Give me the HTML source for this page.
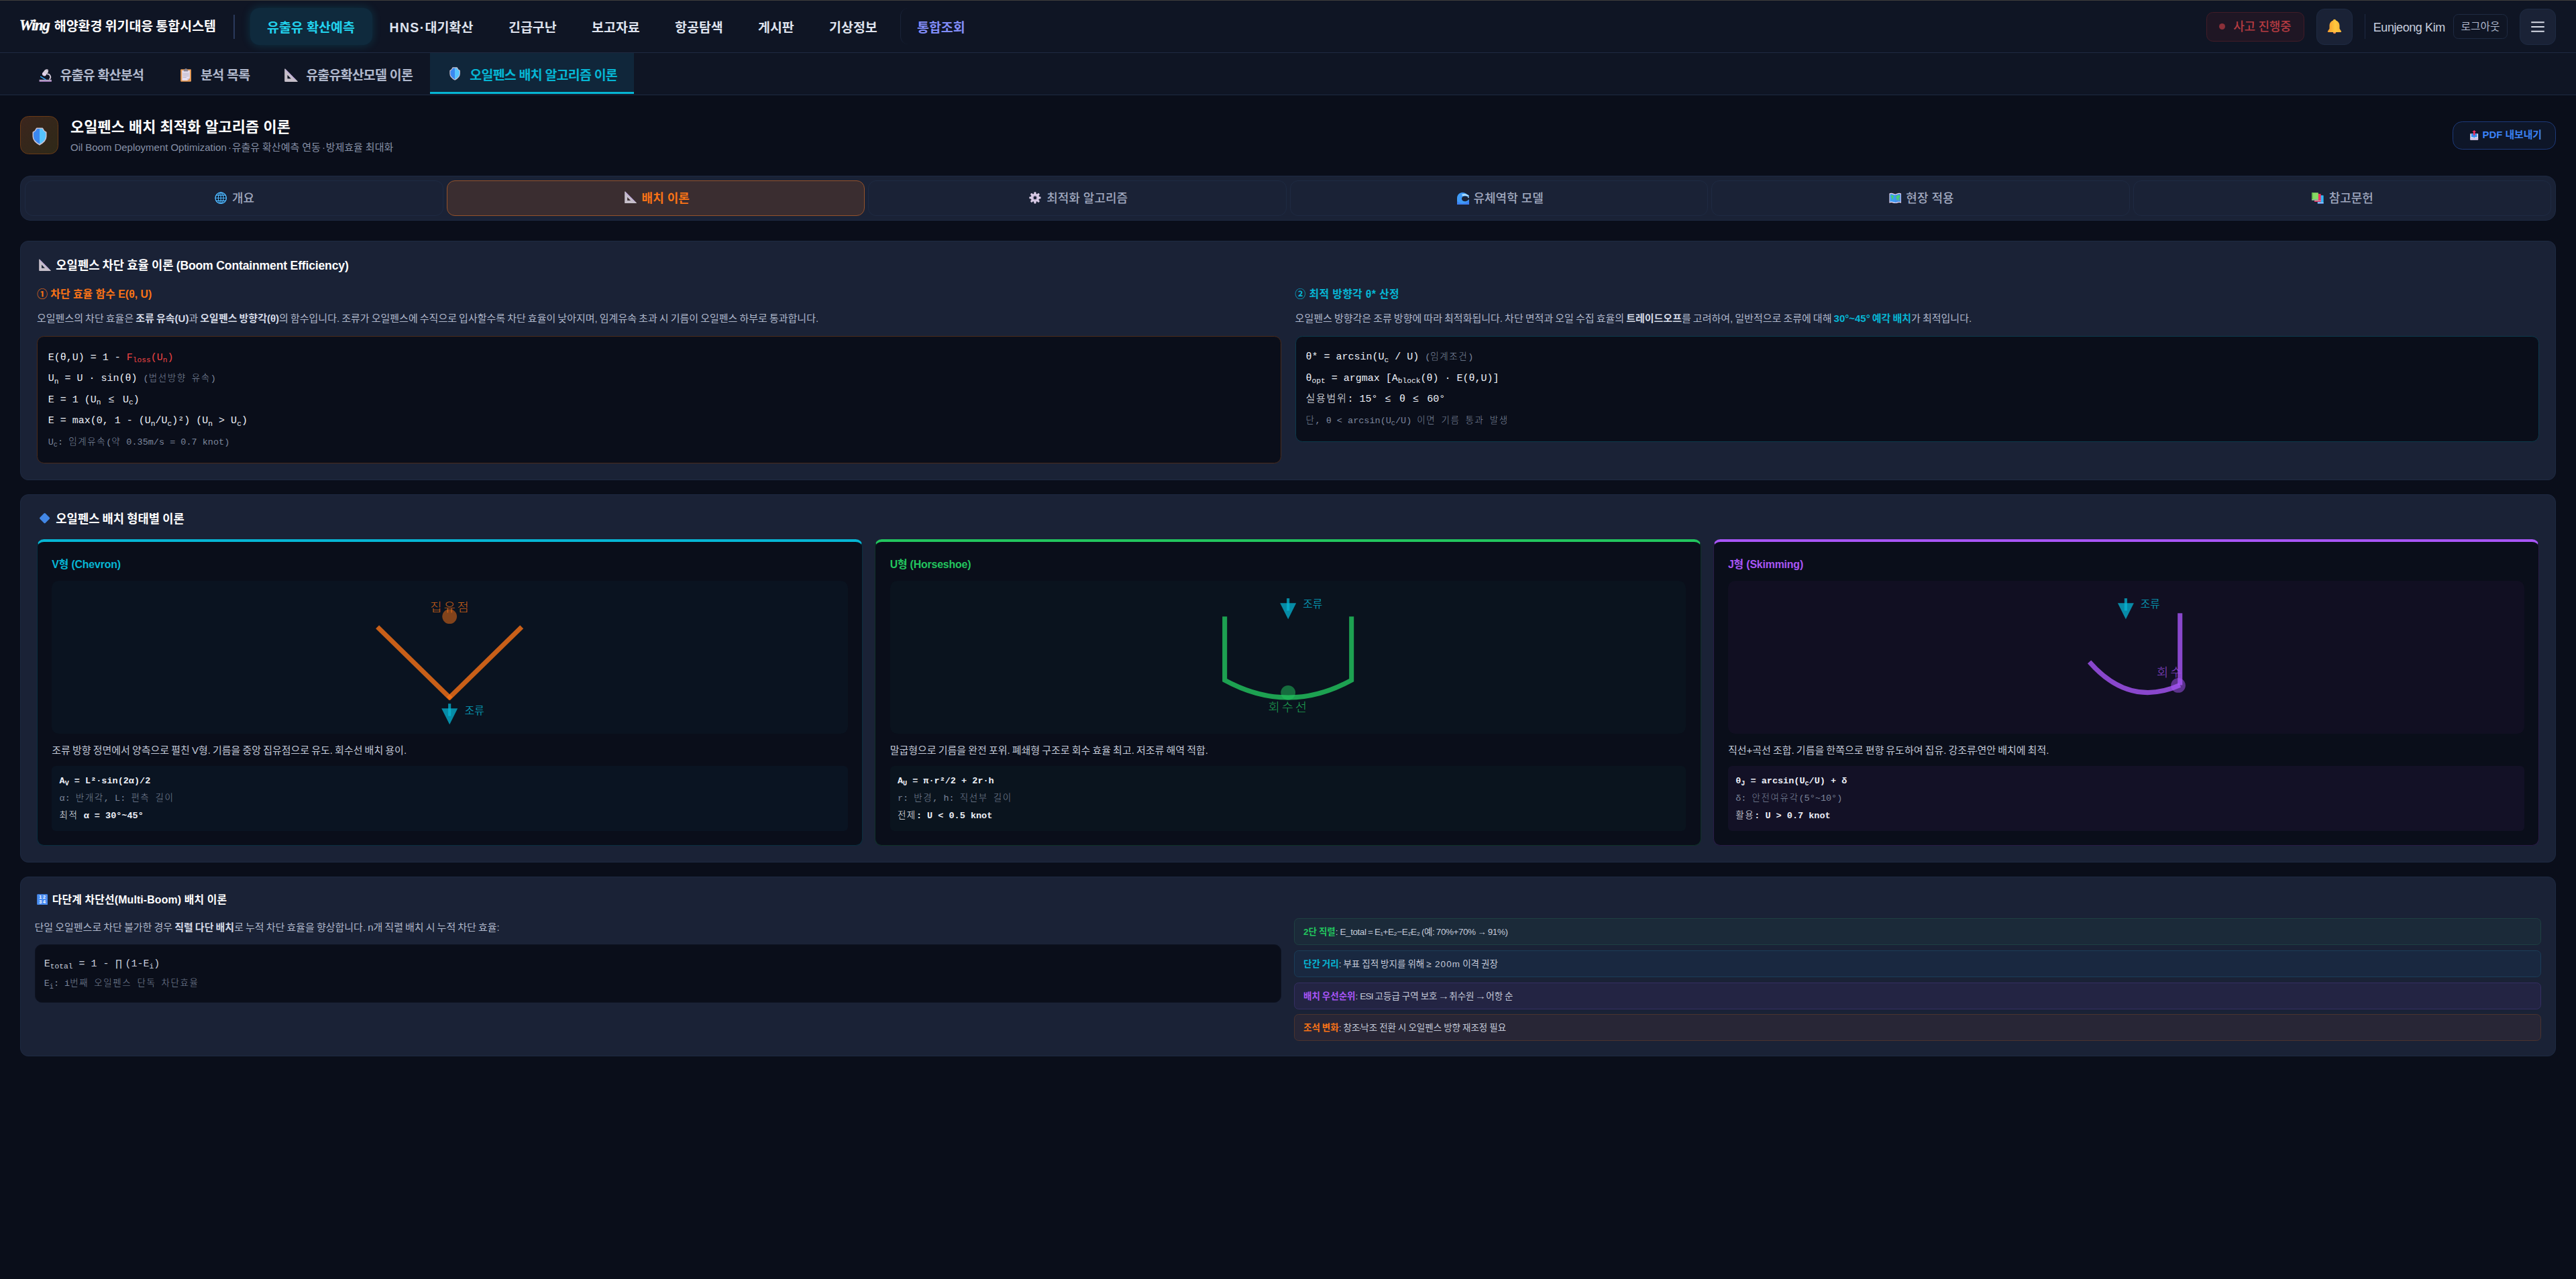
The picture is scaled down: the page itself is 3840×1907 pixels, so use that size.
<!DOCTYPE html>
<html lang="ko">
<head>
<meta charset="utf-8">
<title>오일펜스 배치 최적화 알고리즘 이론</title>
<style>
*{box-sizing:border-box;margin:0;padding:0}
html{background:#0a0e1a;overflow:hidden}
body{zoom:1.5;width:2560px;height:1271.34px;position:relative;overflow:hidden;background:#0a0e1a;color:#edf0f7;
 font-family:"Liberation Sans","Noto Sans CJK KR",sans-serif;font-size:13px;line-height:1.2;-webkit-font-smoothing:antialiased}
.mono{font-family:"Liberation Mono","Noto Sans CJK KR",monospace}
.abs{position:absolute}
b,.b{font-weight:700}
svg{display:block}

/* ===== top header ===== */
#topline{position:absolute;left:0;top:0;width:2560px;height:.67px;background:#3f3e3c}
#hdr{position:absolute;left:0;top:0;width:2560px;height:52.67px;background:#0f1524;border-bottom:1px solid #1e2a42}
#hdr .t{position:absolute;white-space:nowrap;font-weight:700;font-size:13px;line-height:20px;height:20px;top:17.5px;color:#dfe3ee}
#logo{position:absolute;left:19.2px;top:13.9px;width:32px;height:22px;font-family:"Liberation Serif",serif;font-style:italic;font-weight:700;font-size:15.4px;line-height:22px;-webkit-text-stroke:.25px #fff;color:#fff;letter-spacing:-1px;white-space:nowrap}
#hdiv{position:absolute;left:232.3px;top:14.5px;width:1px;height:24px;background:#2a3a5c}
#navact{position:absolute;left:248.7px;top:7.8px;width:121.3px;height:37px;border-radius:9px;background:#0f2a3d;box-shadow:0 0 9px rgba(6,182,212,.2)}
#intg{position:absolute;left:894.5px;top:8.3px;width:90px;height:36px;border-left:1px solid #1a2338;border-radius:8px 0 0 8px}

/* ===== sub nav ===== */
#sub{position:absolute;left:0;top:52.67px;width:2560px;height:42.33px;background:#0f1524;border-bottom:1px solid #1e2a42}
#sub .t{position:absolute;white-space:nowrap;font-weight:700;font-size:13px;line-height:20px;height:20px;top:12.3px;color:#b0b8cc;letter-spacing:-.53px}
#subact{position:absolute;left:427.3px;top:0;width:202.7px;height:40.9px;background:#10263a;border-bottom:2px solid #06b6d4}
#sub svg{position:absolute}

/* ===== header right ===== */
#inc{position:absolute;left:2192.7px;top:12.3px;width:97.3px;height:29px;border-radius:6.5px;background:#1f1624;border:1px solid #421c27}
#inc i{position:absolute;left:12.1px;top:10.4px;width:6px;height:6px;border-radius:50%;background:#8c3039}
#inc span{position:absolute;left:26.2px;top:3.9px;font-size:12px;line-height:20px;font-weight:500;color:#b53b41;white-space:nowrap;letter-spacing:-.2px}
.sqbtn{position:absolute;top:8.67px;width:36px;height:36px;border-radius:8px;background:#1a2236;border:1px solid #1e2a42}
#rdiv{position:absolute;left:2349.7px;top:14px;width:1px;height:24.7px;background:#1e2a42}
#uname{position:absolute;left:2358.5px;top:17.2px;font-size:12px;line-height:20px;color:#c8cede;white-space:nowrap;font-weight:400;letter-spacing:-.28px}
#logout{position:absolute;left:2438px;top:14px;width:54px;height:24.7px;border-radius:5px;border:1px solid #1e2a42;font-size:10.5px;line-height:23.8px;text-align:center;color:#b0b8cc;white-space:nowrap}

/* ===== page head ===== */
#picon{position:absolute;left:20px;top:115.33px;width:38px;height:38px;border-radius:8.5px;background:linear-gradient(135deg,#3b251d,#2e2918);border:1px solid #6a3a16}
#ptitle{position:absolute;left:70px;top:114.4px;font-size:14.6px;font-weight:700;line-height:24px;color:#fff;white-space:nowrap;letter-spacing:.05px}
#psub{position:absolute;left:70px;top:139.2px;font-size:10px;line-height:15px;color:#8690a6;white-space:nowrap;word-spacing:-.15px}
#psub i{font-style:normal;letter-spacing:-1.1px}
#pdf{position:absolute;left:2437.3px;top:120.67px;width:102.7px;height:28px;border-radius:9.5px;background:#0e1628;border:1px solid #1d3a7a;color:#3b82f6;font-weight:700;font-size:9.9px;line-height:26px;white-space:nowrap}
#pdf span{position:absolute;left:29.1px;top:.3px}

/* ===== tab bar ===== */
#tabs{position:absolute;left:20px;top:174.67px;width:2520px;height:44.67px;border-radius:10px;background:#1a2236;border:1px solid #1e2a42}
.tab{position:absolute;top:4px;width:415.67px;height:35px;border-radius:8px;border:1px solid #1e2a42;color:#a0a8bf;font-size:12px;font-weight:500;line-height:33px;white-space:nowrap}
.tab.on{background:#3a2d30;border-color:#95522a;color:#f97316;font-weight:700}
.tab span{position:absolute;top:1.35px}
.tab svg{position:absolute}

/* ===== cards ===== */
.card{position:absolute;left:20px;width:2520px;border-radius:8px;background:#1a2236;border:1px solid #1e2a42}
.card .ttl{position:absolute;font-size:11.8px;font-weight:700;line-height:20px;color:#fff;white-space:nowrap;word-spacing:-.5px}
.card .ttl .la{letter-spacing:-.15px;word-spacing:0}
.h3{position:absolute;font-size:10.6px;font-weight:700;line-height:18px;white-space:nowrap}
.p{position:absolute;font-size:10px;line-height:18px;color:#b0b8cc;white-space:nowrap;word-spacing:-.72px}
.p b{color:#d6dbe8}
.code{position:absolute;border-radius:7px;background:#0a0e1a;border:1px solid #1e2a42}
.code div{position:absolute;left:10.5px;white-space:nowrap;font-family:"Liberation Mono","Noto Sans CJK KR",monospace;font-size:10px;line-height:21px;height:21px;color:#edf0f7}
sub{font-size:.75em;line-height:0;vertical-align:baseline;position:relative;top:.3em}
.dim,.code div.dim{color:#7d879d}
.k{letter-spacing:1.15px;font-weight:300}
.k9{letter-spacing:1.05px;font-weight:300}
.le{margin:0 2.3px 0 1.3px}
.md{font-style:normal;margin:0 -1.1px 0 -1.2px}
.ar{margin:0 -.6px;display:inline-block;transform:scaleX(1.25)}
.sc{position:absolute;top:44.2px;width:820.89px;height:304.2px;border-radius:7px;background:#0a0e1a;border:1px solid #1e2a42;border-top:3px solid #06b6d4}
.sc .h3{left:14.2px;top:13.2px;font-size:10.6px;letter-spacing:-.12px}
.sc .dg{position:absolute;left:14.2px;top:38.67px;width:791.15px;height:151.7px;border-radius:7px}
.sc .dg svg{position:absolute;left:.1px;top:0}
.sc .p{left:14.2px;top:197.6px;font-size:10px;color:#c3c9d8}
.sc .fx{position:absolute;left:14.2px;top:222.3px;width:791.15px;height:64.6px;border-radius:4px}
.sc .fx div{position:absolute;left:7.5px;white-space:nowrap;font-family:"Liberation Mono","Noto Sans CJK KR",monospace;font-size:9px;line-height:17.2px;height:17.2px;color:#edf0f7;font-weight:700}
.sc .fx div.dim{font-weight:400;color:#7b8499}
.it{position:absolute;left:1265.5px;width:1239.1px;height:26.67px;border-radius:4.5px;font-size:9px;line-height:26.9px;word-spacing:-.5px;color:#c3c9d8;white-space:nowrap;padding-left:8.5px}
</style>
</head>
<body>
<div id="hdr">
  <div id="logo">Wing</div>
  <div class="t" style="left:53.8px;top:15.8px;color:#fff;word-spacing:-.9px">해양환경 위기대응 통합시스템</div>
  <div id="hdiv"></div>
  <div id="navact"></div>
  <div class="t" style="left:265.3px;color:#22d3ee">유출유 확산예측</div>
  <div class="t" style="left:387px"><span style="letter-spacing:.9px">HNS·</span>대기확산</div>
  <div class="t" style="left:505.3px">긴급구난</div>
  <div class="t" style="left:588px">보고자료</div>
  <div class="t" style="left:670.7px">항공탐색</div>
  <div class="t" style="left:753.3px">게시판</div>
  <div class="t" style="left:824px">기상정보</div>
  <div id="intg"></div>
  <div class="t" style="left:911.3px;color:#818cf8">통합조회</div>
  <div id="inc"><i></i><span>사고 진행중</span></div>
  <div class="sqbtn" style="left:2302px"><svg width="36" height="36" viewBox="0 0 36 36" style="position:absolute;left:-1px;top:-1px"><defs><linearGradient id="bg1" x1="0" y1="0" x2="1" y2="0"><stop offset="0" stop-color="#f59a2e"/><stop offset=".55" stop-color="#ffc83d"/><stop offset="1" stop-color="#f7b23a"/></linearGradient></defs><path d="M18 10.500c-.8 0-1.300.5-1.400 1.200-2.200.7-3.600 2.800-3.600 5.300v2.800l-1.700 2.600c-.3.500 0 1 .6 1h12.200c.6 0 .9-.5.600-1l-1.700-2.600v-2.800c0-2.500-1.400-4.600-3.600-5.300-.1-.7-.6-1.200-1.400-1.200z" fill="url(#bg1)"/><path d="M16.500 23.400h3a1.500 1.500 0 0 1-3 0z" fill="#f08a50"/></svg></div>
  <div id="rdiv"></div>
  <div id="uname">Eunjeong Kim</div>
  <div id="logout">로그아웃</div>
  <div class="sqbtn" style="left:2504px"><svg width="36" height="36" viewBox="0 0 36 36" style="position:absolute;left:-1px;top:-1px"><path d="M11.5 13.5h13M11.500 18h13M11.500 22.500h13" stroke="#d7dbe6" stroke-width="1.400" fill="none"/></svg></div>
</div>
<div id="topline"></div>
<div id="sub">
  <div id="subact"></div>
  <div class="t" style="left:59.6px">유출유 확산분석</div>
  <div class="t" style="left:199.4px">분석 목록</div>
  <div class="t" style="left:304.1px">유출유확산모델 이론</div>
  <div class="t" style="left:466.9px;color:#06b6d4">오일펜스 배치 알고리즘 이론</div>
  <svg viewBox="0 0 20 20" width="13" height="13" style="position:absolute;left:38.5px;top:15.87px"><path d="M0.600 16.200h18.800v2.200h-18.800z" fill="#b9a5c6"/><path d="M0.600 18.400h18.800v1.200h-18.800z" fill="#9b6fb4"/><path d="M12.400 7.600a4.700 4.700 0 0 1 3.400 8.400" fill="none" stroke="#cfc6d6" stroke-width="2"/><path d="M2.800 11.600l7.400 4.400" stroke="#38a8f8" stroke-width="1.500" stroke-linecap="round"/><g transform="rotate(-52 9.600 5.600)"><rect x="4.200" y="2.600" width="10.800" height="6.200" rx="3" fill="#d6cfdb"/><rect x="6" y="2.600" width="2" height="6.200" fill="#e9d2f5"/><rect x="14.200" y="3.800" width="1.800" height="3.600" rx=".8" fill="#b5abbc"/></g></svg>
  <svg viewBox="0 0 16.500 20" width="10.8" height="13.3" style="position:absolute;left:179.3px;top:15.33px"><rect x=".2" y="1" width="16.100" height="19" rx="1.200" fill="#e59a57"/><path d="M2.400 2.800h11.800v11.800l-3.600 3.600h-8.200z" fill="#e6e0f1"/><path d="M10.600 18.200l3.600-3.600h-3.600z" fill="#cfc6e0"/><path d="M4.800 1.800h6.800v2.600h-6.800z" fill="#8b8591"/><path d="M7 0h2.600l.6 2h-3.800z" fill="#8b8591"/><path d="M3.600 7.200h9.400M3.600 9.400h9.400M3.600 11.400h9.400M3.600 13.600h5.600" stroke="#b6aebf" stroke-width=".9"/></svg>
  <svg viewBox="0 0 20 20" width="13.3" height="13.3" style="position:absolute;left:282.7px;top:15.27px"><path d="M1.200.6L19.600 19.100a.5.500 0 0 1-.4.900H1.200a1 1 0 0 1-1-1V1a.6.600 0 0 1 1-.4zM4.500 9.800v5.400h5.400z" fill="#c6bfca" fill-rule="evenodd"/><path d="M2.700 3l15 15" stroke="#b384f5" stroke-width="1.350" stroke-linecap="round" stroke-dasharray=".01 3.030"/></svg>
  <svg viewBox="0 0 16 20" width="10.8" height="13.33" style="position:absolute;left:446.5px;top:14px"><path d="M5.200.3h5.600q1 0 1.400 1.100.8 2.200 3 3.200.600.300.600 1v4.400q0 5.600-7.800 9.800-7.800-4.200-7.800-9.800v-4.400q0-.7.600-1 2.200-1 3-3.200.400-1.100 1.400-1.100z" fill="#c9c2d2"/><path d="M8 1.500h-2.600q-.4 0-.5.400-.9 2.400-3.300 3.600-.3.100-.3.500v4q0 4.600 6.700 8.400z" fill="#3a88f0"/><path d="M8 1.500h2.600q.4 0 .5.400.9 2.400 3.300 3.600.3.100.3.500v4q0 4.600-6.700 8.400z" fill="#55c4ff"/></svg>
</div>
<div id="picon"><svg viewBox="0 0 16 20" width="14.7" height="18" style="position:absolute;left:11.1px;top:10.4px"><path d="M5.200.3h5.600q1 0 1.400 1.100.8 2.200 3 3.200.600.300.600 1v4.400q0 5.600-7.800 9.800-7.800-4.200-7.800-9.800v-4.400q0-.7.600-1 2.200-1 3-3.200.400-1.100 1.400-1.100z" fill="#c9c2d2"/><path d="M8 1.500h-2.600q-.4 0-.5.400-.9 2.400-3.300 3.600-.3.100-.3.500v4q0 4.600 6.700 8.400z" fill="#3a88f0"/><path d="M8 1.500h2.600q.4 0 .5.400.9 2.400 3.300 3.600.3.100.3.500v4q0 4.600-6.700 8.400z" fill="#55c4ff"/></svg></div>
<div id="ptitle">오일펜스 배치 최적화 알고리즘 이론</div>
<div id="psub">Oil Boom Deployment Optimization<i> · </i>유출유 확산예측 연동<i> · </i>방제효율 최대화</div>
<div id="pdf"><svg viewBox="0 0 12.500 15" width="8.3" height="10" style="position:absolute;left:16.8px;top:7.67px"><path d="M.3 5.200h11.900v8.800q0 .8-.8.800h-10.300q-.8 0-.8-.8z" fill="#e9e2f4"/><path d="M.3 12h11.900v2q0 .8-.8.800h-10.300q-.8 0-.8-.8z" fill="#cdbfe0"/><path d="M1.900 5.200h8.700v5.200h-3l-1.350 1.400-1.350-1.400h-3z" fill="#3b8ff0"/><path d="M6.250 0l2.900 3h-1.700v4.800h-2.400v-4.800h-1.700z" fill="#f02d5e"/></svg><span>PDF 내보내기</span></div>
<div id="tabs">
  <div class="tab" style="left:4px"><svg viewBox="0 0 20 20" width="12.3" height="12.3" style="position:absolute;left:188px;top:10.5px"><circle cx="10" cy="10" r="9.600" fill="#4fb8ff"/><circle cx="10" cy="10" r="8.100" fill="#0b1020"/><g fill="none" stroke="#4fb8ff" stroke-width="1.250"><ellipse cx="10" cy="10" rx="4.200" ry="8.700"/><path d="M10 1v18M1 10h18M2.300 5.500h15.400M2.300 14.500h15.400"/></g></svg><span style="left:205.3px">개요</span></div>
  <div class="tab on" style="left:423px"><svg viewBox="0 0 20 20" width="12.3" height="12.3" style="position:absolute;left:176.1px;top:10px"><path d="M1.200.6L19.600 19.100a.5.500 0 0 1-.4.900H1.200a1 1 0 0 1-1-1V1a.6.600 0 0 1 1-.4zM4.500 9.800v5.400h5.400z" fill="#c6bfca" fill-rule="evenodd"/><path d="M2.700 3l15 15" stroke="#b384f5" stroke-width="1.350" stroke-linecap="round" stroke-dasharray=".01 3.030"/></svg><span style="left:193.4px">배치 이론</span></div>
  <div class="tab" style="left:842px"><svg viewBox="0 0 20 20" width="11.9" height="11.9" style="position:absolute;left:159.6px;top:10.5px"><g fill="#d9cbe6"><circle cx="10" cy="10" r="7"/><rect x="8.200" y=".2" width="3.600" height="19.600" rx="1.600"/><rect x="8.200" y=".2" width="3.600" height="19.600" rx="1.600" transform="rotate(45 10 10)"/><rect x="8.200" y=".2" width="3.600" height="19.600" rx="1.600" transform="rotate(90 10 10)"/><rect x="8.200" y=".2" width="3.600" height="19.600" rx="1.600" transform="rotate(135 10 10)"/></g><circle cx="10" cy="10" r="4.300" fill="#c3b3d3"/><circle cx="10" cy="10" r="2.600" fill="#1a2236"/></svg><span style="left:176.8px">최적화 알고리즘</span></div>
  <div class="tab" style="left:1261px"><svg viewBox="0 0 20 20" width="12.1" height="12.1" style="position:absolute;left:165.7px;top:11px"><path d="M0 20V9.500C0 4 3.800 0 8.800 0c3.400 0 6.400 1.400 8.200 3.600l2.800 1.200-.6 3.200c-2.400-1.800-5.800-2.400-8.400-1.600-2.600.8-3.800 3.400-2.600 5.600 1.200 2.200 4 3 6.800 2.200 2-.6 3.800-1.800 5-3.400V20z" fill="#3f9bf7"/><path d="M0 20v-6c3 3.400 8 4.600 12.600 3.400 3-.8 5.600-2.600 7.400-5V20z" fill="#3d7ff0"/><path d="M7.600 3.600c3-1.600 7.600-1.200 10.800.8l1 2.800c-3-1.800-6.800-2.400-9.800-1.400z" fill="#b9e4ff"/><circle cx="18.600" cy="8.200" r=".9" fill="#b9e4ff"/></svg><span style="left:182px">유체역학 모델</span></div>
  <div class="tab" style="left:1680px"><svg viewBox="0 0 20 18" width="12.3" height="11.07" style="position:absolute;left:175.9px;top:11.1px"><path d="M.4 1.700Q3 .2 5.400 1.200L10 2.800l4.600-1.600Q17 .2 19.600 1.700V17.200Q17 15.600 14.600 16.600L10 18l-4.600-1.400Q3 15.600.4 17.200z" fill="#e8d3ea"/><path d="M1.400 2.900Q3.400 1.800 5.400 2.600L10 4.200l4.600-1.600Q16.600 1.800 18.600 2.900V15.200Q16.600 14.200 14.600 15L10 16.400 5.400 15Q3.400 14.200 1.400 15.200z" fill="#3d9cf2"/><path d="M10 4.200l4.600-1.600Q16.600 1.800 18.600 2.900V15.200Q16.600 14.200 14.600 15L10 16.400z" fill="#4b8fe8"/><path d="M3 4.800l2.200-.5 2 1 1 .2-.8 1.600-1.200.6.400 2.200-1 1.800-1.200-1.800-.2-2.200-1.400-1.200zM11.200 7.200l1.800-2.200 2.800-.8 1.800.8-.6 1.400.4 1.600-1.600.6-.4 2.600-1.400 1.400-1.200-.4-.4-2.200-1.200-1.400zM16 10.600l1.200.6.200 1.600-1.400.4z" fill="#46d070"/></svg><span style="left:192.9px">현장 적용</span></div>
  <div class="tab" style="left:2099px"><svg viewBox="0 0 20 19" width="12" height="11.4" style="position:absolute;left:177px;top:11.1px"><rect x="9.800" y="4.600" width="9.800" height="14" rx=".8" fill="#35b4f5"/><rect x="9.800" y="16.600" width="9.800" height="1.100" fill="#d9cfee"/><rect x="9.800" y="17.700" width="9.800" height=".9" fill="#3b6fd8"/><rect x="4.600" y="2.300" width="10.600" height="13.200" rx=".8" fill="#ee3266"/><rect x="4.600" y="13.600" width="10.600" height="1" fill="#f7a8c2"/><rect x="4.600" y="14.600" width="10.600" height=".9" fill="#c4245a"/><rect x=".2" y=".2" width="10.800" height="13" rx=".8" fill="#86d964"/><rect x=".2" y=".2" width="2" height="13" fill="#5fb64a"/><rect x=".2" y="11.200" width="10.800" height="1.100" fill="#9ab3a6"/><rect x=".2" y="12.300" width="10.800" height=".9" fill="#6f9381"/></svg><span style="left:194.1px">참고문헌</span></div>
</div>
<div class="card" id="c1" style="top:239.33px;height:238px">
  <svg viewBox="0 0 20 20" width="12" height="12" style="position:absolute;left:17.8px;top:17.27px"><path d="M1.200.6L19.600 19.100a.5.500 0 0 1-.4.900H1.200a1 1 0 0 1-1-1V1a.6.600 0 0 1 1-.4zM4.500 9.800v5.400h5.400z" fill="#c6bfca" fill-rule="evenodd"/><path d="M2.700 3l15 15" stroke="#b384f5" stroke-width="1.350" stroke-linecap="round" stroke-dasharray=".01 3.030"/></svg><div class="ttl" style="left:34.9px;top:13.9px">오일펜스 차단 효율 이론 <span class="la">(Boom Containment Efficiency)</span></div>
  <div class="h3" style="left:16px;top:43.1px;color:#f97316">① 차단 효율 함수 E(θ, U)</div>
  <div class="p" style="left:16px;top:67.2px">오일펜스의 차단 효율은 <b>조류 유속(U)</b>과 <b>오일펜스 방향각(θ)</b>의 함수입니다. 조류가 오일펜스에 수직으로 입사할수록 차단 효율이 낮아지며, 임계유속 초과 시 기름이 오일펜스 하부로 통과합니다.</div>
  <div class="code" id="cb1" style="left:16px;top:93.8px;width:1236.67px;height:127px;border-color:#4a2b1a">
    <div style="top:10.70px">E(θ,U) = 1 - <span style="color:#ef4444">F<sub>loss</sub>(U<sub>n</sub>)</span></div>
    <div style="top:31.70px">U<sub>n</sub> = U · sin(θ) <span class="dim" style="font-size:9px">(<span class="k9">법선방향</span> <span class="k9">유속</span>)</span></div>
    <div style="top:52.60px">E = 1 (U<sub>n</sub> <span class="le">≤</span> U<sub>c</sub>)</div>
    <div style="top:73.80px">E = max(0, 1 - (U<sub>n</sub>/U<sub>c</sub>)²) (U<sub>n</sub> &gt; U<sub>c</sub>)</div>
    <div style="top:94.60px;font-size:9px" class="dim">U<sub>c</sub>: <span class="k9">임계유속</span>(<span class="k9">약</span> 0.35m/s = 0.7 knot)</div>
  </div>
  <div class="h3" style="left:1266.4px;top:43.1px;color:#06b6d4;letter-spacing:.22px">② 최적 방향각 θ* 산정</div>
  <div class="p" style="left:1266.4px;top:67.2px">오일펜스 방향각은 조류 방향에 따라 최적화됩니다. 차단 면적과 오일 수집 효율의 <b>트레이드오프</b>를 고려하여, 일반적으로 조류에 대해 <b style="color:#06b6d4">30°~45° 예각 배치</b>가 최적입니다.</div>
  <div class="code" id="cb2" style="left:1266.6px;top:93.9px;width:1236.07px;height:105.4px;border-color:#0c3a4c">
    <div style="top:10.30px;left:9.7px">θ* = arcsin(U<sub>c</sub> / U) <span class="dim" style="font-size:9px;left:9.7px">(<span class="k9">임계조건</span>)</span></div>
    <div style="top:31.30px;left:9.7px">θ<sub>opt</sub> = argmax [A<sub>block</sub>(θ) · E(θ,U)]</div>
    <div style="top:52.20px;left:9.7px"><span class="k">실용범위</span>: 15° <span class="le">≤</span> θ <span class="le">≤</span> 60°</div>
    <div style="top:73.40px;left:9.7px;font-size:9px" class="dim"><span class="k9">단</span>, θ &lt; arcsin(U<sub>c</sub>/U) <span class="k9">이면</span> <span class="k9">기름</span> <span class="k9">통과</span> <span class="k9">발생</span></div>
  </div>
</div>
<div class="card" id="c2" style="top:491.33px;height:366px">
  <svg viewBox="0 0 20 20" width="11.5" height="11.5" style="position:absolute;left:18.17px;top:17.67px"><rect x="3.300" y="3.300" width="13.400" height="13.400" rx="1.800" transform="rotate(45 10 10)" fill="#4287e6"/></svg><div class="ttl" style="left:34.9px;top:13.9px">오일펜스 배치 형태별 이론</div>
  <div class="sc" style="left:16px;border-color:#0a3040;border-top-color:#06b6d4">
    <div class="h3" style="color:#06b6d4">V형 (Chevron)</div>
    <div class="dg" style="background:#0a1320"><svg width="790.9" height="151.7" viewBox="0 0 790.9 151.7"><g fill="none" stroke="#f97316" stroke-opacity=".8" stroke-width="4.700"><path d="M323.75 45.800L396.65 117.200"/><path d="M467.15 45.800L394.25 117.200"/></g><circle cx="395.45" cy="35.500" r="7.250" fill="#f97316" fill-opacity=".5"/><text x="376.25" y="30.60" text-anchor="start" font-size="12.5" letter-spacing="1.9" font-weight="300" fill="#f97316" fill-opacity="0.8">집유점</text><path d="M395.45 122.10V134.40" stroke="#06b6d4" stroke-opacity=".75" stroke-width="2.750"/><path d="M387.45 126.80h16l-8 16.100z" fill="#06b6d4" fill-opacity=".75"/><text x="410.45" y="132.50" font-size="10.500" fill="#06b6d4" fill-opacity=".75">조류</text></svg></div>
    <div class="p">조류 방향 정면에서 양측으로 펼친 V형. 기름을 중앙 집유점으로 유도. 회수선 배치 용이.</div>
    <div class="fx" style="background:#0a1422">
      <div style="top:6.8px">A<sub>V</sub> = L²·sin(2α)/2</div>
      <div style="top:24.1px" class="dim">α: <span class="k9">반개각</span>, L: <span class="k9">편측</span> <span class="k9">길이</span></div>
      <div style="top:41.3px"><span class="k9">최적</span> α = 30°~45°</div>
    </div>
  </div>
  <div class="sc" style="left:848.89px;border-color:#0f3228;border-top-color:#22c55e">
    <div class="h3" style="color:#22c55e">U형 (Horseshoe)</div>
    <div class="dg" style="background:#0a131e"><svg width="790.9" height="151.7" viewBox="0 0 790.9 151.7"><path d="M332.45 35.500V98.700Q395.45 133.300 458.45 98.700V35.500" fill="none" stroke="#22c55e" stroke-opacity=".8" stroke-width="4.700" stroke-linejoin="miter"/><circle cx="395.45" cy="111.200" r="7.250" fill="#22c55e" fill-opacity=".5"/><text x="375.75" y="130.10" text-anchor="start" font-size="12.5" letter-spacing="1.9" font-weight="300" fill="#22c55e" fill-opacity="0.8">회수선</text><path d="M395.45 17.40V29.70" stroke="#06b6d4" stroke-opacity=".75" stroke-width="2.750"/><path d="M387.45 22.10h16l-8 16.100z" fill="#06b6d4" fill-opacity=".75"/><text x="410.12" y="26.60" font-size="10.500" fill="#06b6d4" fill-opacity=".75">조류</text></svg></div>
    <div class="p">말굽형으로 기름을 완전 포위. 폐쇄형 구조로 회수 효율 최고. 저조류 해역 적합.</div>
    <div class="fx" style="background:#0a141e">
      <div style="top:6.8px">A<sub>U</sub> = π·r²/2 + 2r·h</div>
      <div style="top:24.1px" class="dim">r: <span class="k9">반경</span>, h: <span class="k9">직선부</span> <span class="k9">길이</span></div>
      <div style="top:41.3px"><span class="k9">전제</span>: U &lt; 0.5 knot</div>
    </div>
  </div>
  <div class="sc" style="left:1681.78px;border-color:#2a1c46;border-top-color:#a855f7">
    <div class="h3" style="color:#a855f7">J형 (Skimming)</div>
    <div class="dg" style="background:#110f22"><svg width="790.9" height="151.7" viewBox="0 0 790.9 151.7"><path d="M449.15 32.200V103.700" fill="none" stroke="#a855f7" stroke-opacity=".8" stroke-width="4.700"/><path d="M449.15 103.700Q398.65 126 359.05 80.600" fill="none" stroke="#a855f7" stroke-opacity=".8" stroke-width="4.700"/><circle cx="447.35" cy="104" r="7.250" fill="#a855f7" fill-opacity=".5"/><text x="426.05" y="95.10" text-anchor="start" font-size="12.5" letter-spacing="1.9" font-weight="300" fill="#a855f7" fill-opacity="0.8">회수</text><path d="M395.25 17.40V29.70" stroke="#06b6d4" stroke-opacity=".75" stroke-width="2.750"/><path d="M387.25 22.10h16l-8 16.100z" fill="#06b6d4" fill-opacity=".75"/><text x="409.85" y="26.60" font-size="10.500" fill="#06b6d4" fill-opacity=".75">조류</text></svg></div>
    <div class="p">직선+곡선 조합. 기름을 한쪽으로 편향 유도하여 집유. 강조류<i class="md">·</i>연안 배치에 최적.</div>
    <div class="fx" style="background:#131126">
      <div style="top:6.8px">θ<sub>J</sub> = arcsin(U<sub>c</sub>/U) + δ</div>
      <div style="top:24.1px" class="dim">δ: <span class="k9">안전여유각</span>(5°~10°)</div>
      <div style="top:41.3px"><span class="k9">활용</span>: U &gt; 0.7 knot</div>
    </div>
  </div>
</div>
<div class="card" id="c3" style="top:871.33px;height:178.7px">
  <svg viewBox="0 0 20 20" width="10.9" height="10.9" style="position:absolute;left:16.1px;top:16.7px"><rect x=".2" y=".2" width="19.600" height="19.600" rx="1.600" fill="#4a8df2"/><text font-family="Liberation Sans,sans-serif" font-weight="700" font-size="8.600" fill="#fff"><tspan x="4.100" y="8.700">1</tspan><tspan x="11.100" y="8.700">2</tspan><tspan x="4.100" y="17.300">3</tspan><tspan x="11.100" y="17.300">4</tspan></text></svg><div class="ttl" style="left:31.2px;top:12.4px;font-size:10.6px;letter-spacing:.08px;word-spacing:0">다단계 차단선<span class="la" style="letter-spacing:.08px">(Multi-Boom)</span> 배치 이론</div>
  <div class="p" style="left:13.67px;top:40.8px">단일 오일펜스로 차단 불가한 경우 <b>직렬 다단 배치</b>로 누적 차단 효율을 향상합니다. n개 직렬 배치 시 누적 차단 효율:</div>
  <div class="code" id="cb3" style="left:13.8px;top:66.9px;width:1239.2px;height:58px;border-color:#0d1220">
    <div style="top:8.2px;left:8.7px;color:#c9cfdd">E<sub>total</sub> = 1 - <span style="margin:0 3.3px 0 .6px">∏</span>(1-E<sub>i</sub>)</div>
    <div style="top:28.1px;left:8.7px;font-size:9px" class="dim">E<sub>i</sub>: i<span class="k9">번째</span> <span class="k9">오일펜스</span> <span class="k9">단독</span> <span class="k9">차단효율</span></div>
  </div>
  <div class="it" style="top:40.67px;background:#1b2a39;border:1px solid #1f4042"><b style="color:#22c55e">2단 직렬</b>: <span style="letter-spacing:-.3px">E_total = E₁+E₂−E₁<i class="md">·</i>E₂ (예: 70%+70% → 91%)</span></div>
  <div class="it" style="top:72.67px;background:#192840;border:1px solid #1b3d58"><b style="color:#06b6d4">단간 거리</b>: 부표 집적 방지를 위해 <span style="letter-spacing:.75px">≥ 200m</span> 이격 권장</div>
  <div class="it" style="top:104.67px;background:#232443;border:1px solid #352f62"><b style="color:#a855f7">배치 우선순위</b>: <span style="letter-spacing:-.55px">ESI</span> 고등급 구역 보호 <span class="ar">→</span> 취수원 <span class="ar">→</span> 어항 순</div>
  <div class="it" style="top:136px;height:27px;background:#282636;border:1px solid #4a332f"><b style="color:#f97316">조석 변화</b>: 창조<i class="md">·</i>낙조 전환 시 오일펜스 방향 재조정 필요</div>
</div>
</body>
</html>
